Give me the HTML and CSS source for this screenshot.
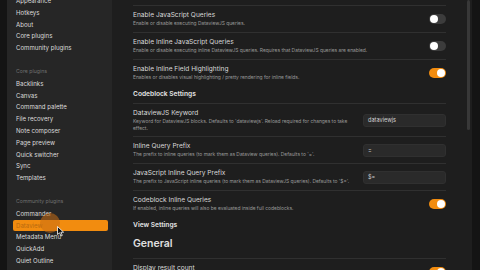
FILE: index.html
```html
<!DOCTYPE html>
<html>
<head>
<meta charset="utf-8">
<link rel="stylesheet" href="styles.css">
</head>
<body>
<div class="app">
  <div class="edge"></div>
  <nav class="sidebar">
    <div class="nav-scroll">
      <div class="nav-item">Appearance</div>
      <div class="nav-item">Hotkeys</div>
      <div class="nav-item">About</div>
      <div class="nav-item">Core plugins</div>
      <div class="nav-item">Community plugins</div>
      <div class="nav-head">Core plugins</div>
      <div class="nav-item">Backlinks</div>
      <div class="nav-item">Canvas</div>
      <div class="nav-item">Command palette</div>
      <div class="nav-item">File recovery</div>
      <div class="nav-item">Note composer</div>
      <div class="nav-item">Page preview</div>
      <div class="nav-item">Quick switcher</div>
      <div class="nav-item">Sync</div>
      <div class="nav-item">Templates</div>
      <div class="nav-head">Community plugins</div>
      <div class="nav-item">Commander</div>
      <div class="nav-item active">Dataview</div>
      <div class="nav-item">Metadata Menu</div>
      <div class="nav-item">QuickAdd</div>
      <div class="nav-item">Quiet Outline</div>
    </div>
    <div class="click-glow"></div>
    <svg class="cursor" width="8" height="11" viewBox="0 0 8 11"><path d="M0.5 0.5 L0.5 8.5 L2.5 6.8 L4 10 L5.3 9.4 L3.9 6.3 L6.6 6.2 Z" fill="#111" stroke="#fff" stroke-width="0.8" stroke-linejoin="round"/></svg>
  </nav>
  <main class="main">
    <div class="content">
      <div class="divider"></div>
      <div class="setting">
        <div class="info">
          <div class="name">Enable JavaScript Queries</div>
          <div class="desc">Enable or disable executing DataviewJS queries.</div>
        </div>
        <div class="toggle"></div>
      </div>
      <div class="divider"></div>
      <div class="setting">
        <div class="info">
          <div class="name">Enable Inline JavaScript Queries</div>
          <div class="desc">Enable or disable executing inline DataviewJS queries. Requires that DataviewJS queries are enabled.</div>
        </div>
        <div class="toggle"></div>
      </div>
      <div class="divider"></div>
      <div class="setting">
        <div class="info">
          <div class="name">Enable Inline Field Highlighting</div>
          <div class="desc">Enables or disables visual highlighting / pretty rendering for inline fields.</div>
        </div>
        <div class="toggle on"></div>
      </div>
      <div class="heading">Codeblock Settings</div>
      <div class="divider"></div>
      <div class="setting tall">
        <div class="info">
          <div class="name">DataviewJS Keyword</div>
          <div class="desc">Keyword for DataviewJS blocks. Defaults to 'dataviewjs'. Reload required for changes to take effect.</div>
        </div>
        <div class="input">dataviewjs</div>
      </div>
      <div class="divider"></div>
      <div class="setting">
        <div class="info">
          <div class="name">Inline Query Prefix</div>
          <div class="desc">The prefix to inline queries (to mark them as Dataview queries). Defaults to '='.</div>
        </div>
        <div class="input">=</div>
      </div>
      <div class="divider"></div>
      <div class="setting">
        <div class="info">
          <div class="name">JavaScript Inline Query Prefix</div>
          <div class="desc">The prefix to JavaScript inline queries (to mark them as DataviewJS queries). Defaults to '$='.</div>
        </div>
        <div class="input">$=</div>
      </div>
      <div class="divider"></div>
      <div class="setting">
        <div class="info">
          <div class="name">Codeblock Inline Queries</div>
          <div class="desc">If enabled, inline queries will also be evaluated inside full codeblocks.</div>
        </div>
        <div class="toggle on"></div>
      </div>
      <div class="heading">View Settings</div>
      <div class="big-heading">General</div>
      <div class="divider"></div>
      <div class="setting">
        <div class="info">
          <div class="name">Display result count</div>
          <div class="desc">&nbsp;</div>
        </div>
        <div class="toggle on"></div>
      </div>
    </div>
  </main>
  <div class="scroll-track"><div class="thumb"></div></div>
  <div class="edge-right"></div>
</div>
</body>
</html>
```

FILE: styles.css
```css
* { box-sizing: border-box; }
html, body { margin: 0; padding: 0; }
body {
  width: 480px;
  height: 270px;
  overflow: hidden;
  background: #1e1e1e;
  font-family: Inter, "Noto Sans", sans-serif;
  color: #dadada;
}
.app {
  display: flex;
  width: 480px;
  height: 270px;
}
.edge {
  width: 7px;
  flex: none;
  background: #141414;
}
.sidebar {
  position: relative;
  width: 105px;
  flex: none;
  background: #262626;
  padding: 0 4px 0 6px;
  overflow: hidden;
}
.nav-scroll {
  margin-top: -5px;
}
.nav-item {
  height: 11.8px;
  line-height: 11.8px;
  padding-left: 3px;
  font-size: 6.1px;
  color: #dcdcdc;
  white-space: nowrap;
  border-radius: 2px;
}
.nav-head {
  height: 11.8px;
  line-height: 11.8px;
  margin-top: 12px;
  padding-left: 3px;
  font-size: 5.2px;
  color: #6f6f6f;
}
.nav-item.active {
  background: #f28c0f;
  color: #b86a10;
}
.click-glow {
  position: absolute;
  left: 33px;
  top: 213px;
  width: 20px;
  height: 20px;
  border-radius: 50%;
  background: rgba(200, 110, 20, 0.55);
}
.cursor {
  position: absolute;
  left: 50px;
  top: 226px;
}
.main {
  flex: 1;
  padding-left: 21px;
  overflow: hidden;
}
.content {
  width: 313px;
  padding-top: 5px;
}
.divider {
  height: 1px;
  background: #303030;
}
.setting {
  display: flex;
  align-items: center;
  justify-content: space-between;
  height: 26px;
  gap: 5px;
}
.setting.tall { height: 32px; }
.info {
  flex: 1;
  min-width: 0;
}
.name {
  font-size: 6.6px;
  line-height: 9px;
  color: #dadada;
}
.desc {
  font-size: 4.9px;
  line-height: 7px;
  color: #9a9a9a;
}
.toggle {
  position: relative;
  flex: none;
  width: 17px;
  height: 10px;
  border-radius: 5px;
  background: #3c3c3c;
}
.toggle::after {
  content: "";
  position: absolute;
  left: 1px;
  top: 1px;
  width: 8px;
  height: 8px;
  border-radius: 50%;
  background: #fff;
}
.toggle.on { background: #f28c0f; }
.toggle.on::after { left: 8px; }
.input {
  flex: none;
  width: 83px;
  height: 13px;
  line-height: 11px;
  padding-left: 4px;
  border-radius: 3px;
  background: #2a2a2a;
  border: 1px solid #303030;
  font-size: 5.6px;
  color: #d0d0d0;
}
.heading {
  height: 17px;
  line-height: 17px;
  font-size: 6.6px;
  font-weight: 700;
  color: #dadada;
}
.big-heading {
  height: 23.5px;
  line-height: 19px;
  font-size: 10.5px;
  font-weight: 600;
  color: #e0e0e0;
}
.scroll-track {
  width: 6px;
  flex: none;
  background: #1e1e1e;
  padding-left: 1px;
}
.thumb {
  width: 3px;
  height: 130px;
  background: #383838;
  border-radius: 2px;
}
.edge-right {
  width: 8px;
  flex: none;
  background: #141414;
}
```
